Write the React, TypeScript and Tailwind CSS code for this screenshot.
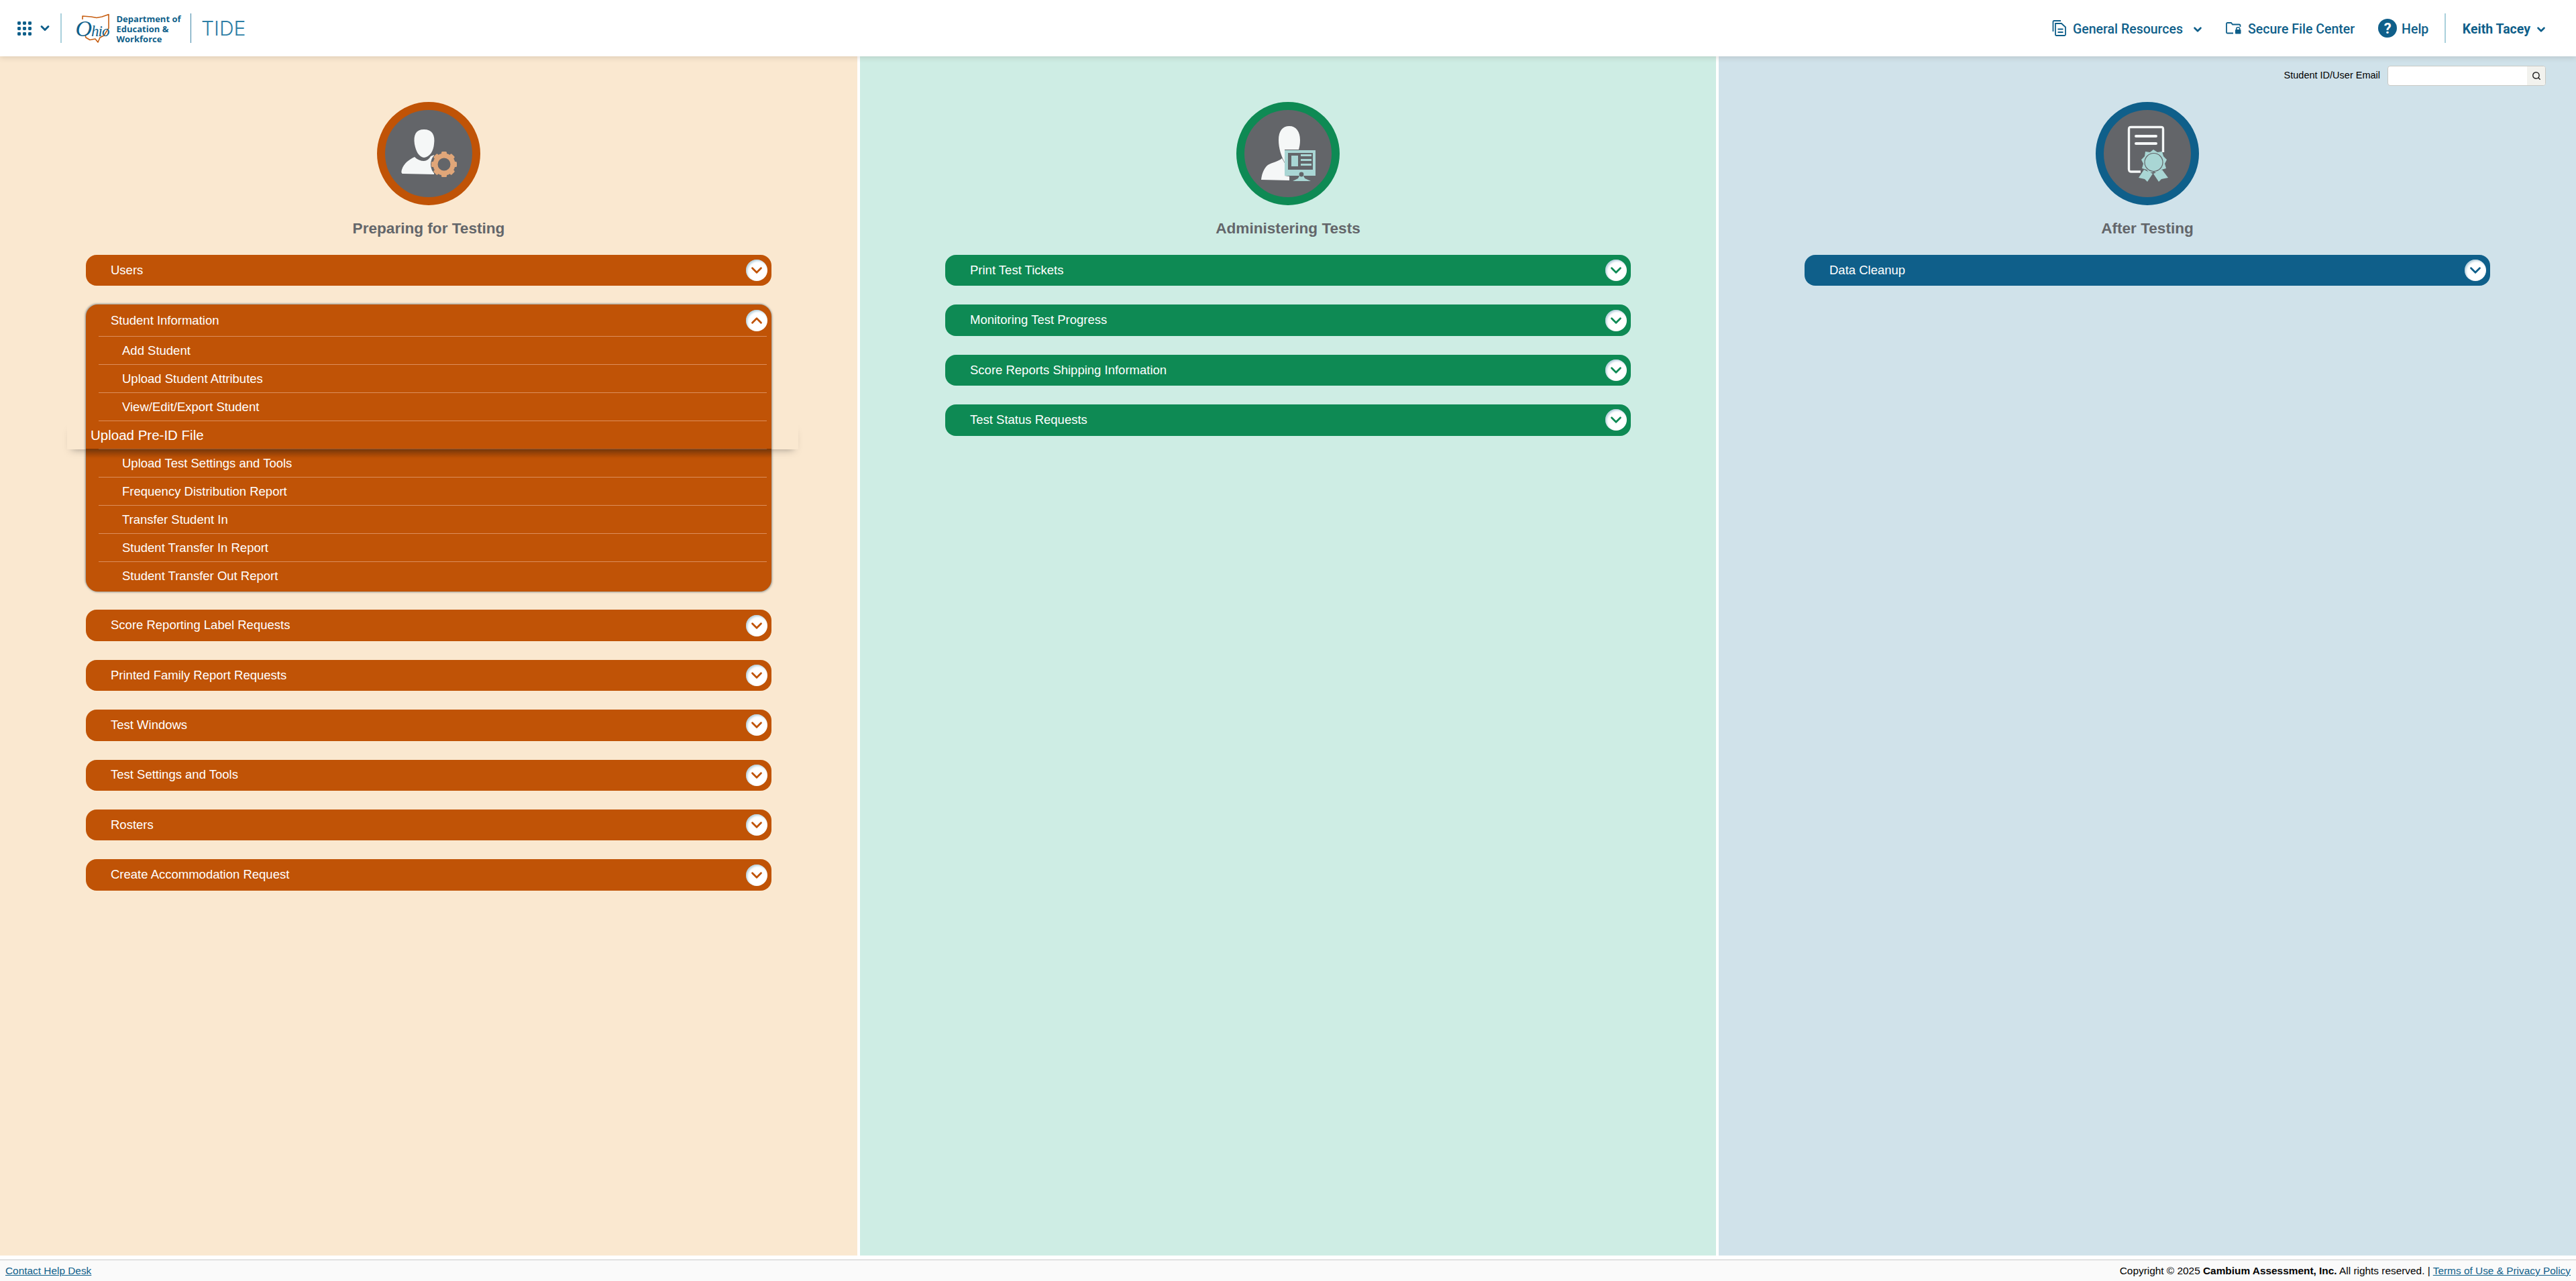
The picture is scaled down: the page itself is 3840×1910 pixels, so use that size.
import type { ReactNode } from 'react'
import { ChevronDown, ChevronUp, Search } from 'lucide-react'

function GridIcon() {
  const cells = [0, 8, 16]
  return (
    <svg width="21" height="21" viewBox="0 0 21 21" fill="#0f5f8a">
      {cells.map((y) => cells.map((x) => <rect key={`${x}-${y}`} x={x} y={y} width="5" height="5" rx="1.4" />))}
    </svg>
  )
}

function OhioLogo() {
  return (
    <div className="relative w-[56px] h-[44px] shrink-0">
      <svg width="56" height="44" viewBox="0 0 56 44" fill="none" className="absolute inset-0">
        <path d="M11 9 L11 4 L24 5 L32 6.5 L40 5 L50 1.5 L50 22 L46 28 L43 33 L37 36 L34 43 L30 38 L22 39.5 L16 36 L15 32" stroke="#c75f13" strokeWidth="1.6" strokeLinejoin="round" />
      </svg>
      <span className="absolute left-[1px] top-[4px] font-['Liberation_Serif',serif] italic leading-[38px] tracking-[-1px] text-[#0f5f8a] whitespace-nowrap">
        <span className="text-[34px]">O</span><span className="text-[23px]">hio</span>
      </span>
    </div>
  )
}

function PreparingIcon() {
  return (
    <svg width="129" height="129" viewBox="0 0 129 129">
      <path d="M43 50 C41 36 45 28 57 28 C69 28 74 36 72 50 C71 60 66 69 57 70 C49 69 45 60 43 50Z" fill="#f5f7f7" />
      <path d="M43 69 C47 73 52 75 57 75 C61 75 65 72 67 68 L72 66 L72 95 L26 94 C23 94 23 91 24 88 C27 78 35 73 43 69Z" fill="#f5f7f7" />
      <circle cx="87" cy="80" r="20" fill="#636569" />
      <circle cx="87" cy="80" r="13" fill="none" stroke="#e0a679" strokeWidth="7" />
      <g fill="#e0a679">
        {[0, 45, 90, 135, 180, 225, 270, 315].map((a) => (
          <rect key={a} x="83" y="61" width="8" height="7" rx="1.5" transform={`rotate(${a} 87 80)`} />
        ))}
      </g>
    </svg>
  )
}

function AdministeringIcon() {
  return (
    <svg width="129" height="129" viewBox="0 0 129 129">
      <path d="M50 44 C50 30 56 23 66 23 C76 23 82 31 82 44 C82 50 81 54 80 58 L59 58 L59 77 C54 68 50 56 50 44Z" fill="#f5f7f7" />
      <path d="M55 71 L59 78 L59 97 L66 98 L66 104 L24 103 C25 94 28 86 34 81 C40 77 50 76 55 71Z" fill="#f5f7f7" />
      <rect x="59" y="59" width="46" height="38" fill="#a9d6d4" />
      <rect x="64" y="63" width="37" height="25" fill="#636569" />
      <rect x="69" y="67" width="10" height="16" fill="#a9d6d4" />
      <rect x="83" y="65" width="16" height="3" fill="#a9d6d4" />
      <rect x="83" y="72" width="16" height="3" fill="#a9d6d4" />
      <rect x="83" y="79" width="16" height="3" fill="#a9d6d4" />
      <path d="M81 97 L87 97 L89 101 L98 105 L71 105 L79 101Z" fill="#a9d6d4" />
      <circle cx="84" cy="95" r="3.4" fill="#636569" />
    </svg>
  )
}

function AfterIcon() {
  return (
    <svg width="129" height="129" viewBox="0 0 129 129">
      <path d="M54 91 L40 91 C37 91 36.5 90 36.5 87 L36.5 28 C36.5 25 37 24.5 40 24.5 L84 24.5 C87 24.5 87.5 25 87.5 28 L87.5 62" fill="none" stroke="#f5f7f7" strokeWidth="3.4" />
      <rect x="45" y="36" width="34" height="4" rx="2" fill="#f5f7f7" />
      <rect x="45" y="47" width="34" height="4" rx="2" fill="#f5f7f7" />
      <path d="M59 88 L51 100 L60 102 L64 106 L72 94Z M86 88 L95 100 L85 102 L81 106 L73 94Z" fill="#a9d6d4" />
      <path d="M73 58 L79 62 L86 61 L88 68 L93 73 L90 79 L92 86 L85 88 L81 94 L74 91 L67 93 L63 88 L56 86 L58 79 L55 73 L60 68 L61 61 L68 62Z" fill="#a9d6d4" />
      <circle cx="73.5" cy="77" r="13.5" fill="#a9d6d4" stroke="#636569" strokeWidth="1.2" />
    </svg>
  )
}

function RoundButton({ open, color }: { open?: boolean; color: string }) {
  const Icon = open ? ChevronUp : ChevronDown
  return (
    <div className="w-[32px] h-[32px] rounded-full bg-white flex items-center justify-center shadow-[inset_2px_2px_3px_rgba(90,150,180,0.45)] shrink-0">
      <Icon size={26} color={color} strokeWidth={2.6} />
    </div>
  )
}

function Bar({ label, bg, color }: { label: string; bg: string; color: string }) {
  return (
    <div className={`${bg} h-[46.4px] mb-[28px] rounded-[16px] flex items-center justify-between pl-[37px] pr-[6px] text-white text-[18.5px]`}>
      <span className="-mt-[1px]">{label}</span>
      <RoundButton color={color} />
    </div>
  )
}

function Row({ label }: { label: string }) {
  return (
    <div className="h-[42px] ml-[19px] border-t-[1.5px] border-[#dc8e5c] flex items-center pl-[35px] text-[18.5px]">
      {label}
    </div>
  )
}

function StudentPanel() {
  return (
    <div className="bg-[#c05306] rounded-[18px] mb-[27px] text-white shadow-[-1px_-1px_3px_rgba(70,90,100,0.55),1px_1px_3px_rgba(70,90,100,0.5)] h-[428px]">
      <div className="h-[47px] flex items-center justify-between pl-[37px] pr-[6px] text-[18.5px]">
        <span>Student Information</span>
        <RoundButton open color="#c05306" />
      </div>
      <div className="mr-[7px]">
        <Row label="Add Student" />
        <Row label="Upload Student Attributes" />
        <Row label="View/Edit/Export Student" />
        <div className="relative h-[42px] ml-[19px] border-t-[1.5px] border-[#dc8e5c] flex items-center text-[20.5px]">
          <span className="-ml-[12px]">Upload Pre-ID File</span>
          {/* hover shadow of the row: faint past the panel edges, darker on the panel */}
          <div className="absolute left-[-47px] right-[-47px] bottom-[-1px] h-[40px] shadow-[0_7px_12px_-7px_rgba(60,60,60,0.5)]" />
          <div className="absolute left-[-19px] right-[-7px] top-[41px] h-[14px] bg-gradient-to-b from-[rgba(60,25,0,0.45)] to-transparent" />
        </div>
        <Row label="Upload Test Settings and Tools" />
        <Row label="Frequency Distribution Report" />
        <Row label="Transfer Student In" />
        <Row label="Student Transfer In Report" />
        <Row label="Student Transfer Out Report" />
      </div>
    </div>
  )
}

function Column({ title, className, ring, icon, children }: { title: string; className: string; ring: string; icon: ReactNode; children: ReactNode }) {
  return (
    <section className={`${className} shrink-0 pt-[68px]`}>
      <div className={`${ring} w-[154px] h-[154px] rounded-full mx-auto border-[12.5px] bg-[#636569] flex items-center justify-center`}>
        {icon}
      </div>
      <h2 className="text-center text-[#63666a] font-bold text-[22.6px] leading-[28px] mt-[21px] mb-[25px]">{title}</h2>
      {children}
    </section>
  )
}

export default function App() {
  const orange = 'bg-[#c05306]'
  const green = 'bg-[#0e8a54]'
  const blue = 'bg-[#0f5f8a]'

  return (
    <div className="font-['Liberation_Sans',Arial,sans-serif] w-[3840px] h-[1910px] flex flex-col bg-white overflow-hidden">
      <header className="relative z-10 h-[84px] shrink-0 bg-white flex items-center justify-between shadow-[0_2px_8px_rgba(90,80,60,0.18)]">
        <div className="flex items-center">
          <div className="pl-[26px] flex items-center gap-[10px] w-[90px]">
            <GridIcon />
            <ChevronDown size={20} color="#0f5f8a" strokeWidth={3.5} />
          </div>
          <div className="w-[1.5px] h-[44px] bg-[#a9d0dc]" />
          <div className="ml-[20px]"><OhioLogo /></div>
          <div className="ml-[6px] pt-[2px] w-[102px] font-['Open_Sans',sans-serif] font-bold text-[13px] leading-[15px] text-[#0f5f8a]">
            Department of<br />Education &amp;<br />Workforce
          </div>
          <div className="ml-[8px] w-[1.5px] h-[44px] bg-[#3f86a8]" />
          <div className="ml-[15px] font-['Inter',sans-serif] font-light text-[30px] text-[#2d7ea5]">TIDE</div>
        </div>
        <div className="flex items-center text-[#0f5f8a] text-[19.5px] font-['Roboto',sans-serif] font-medium pr-[43px]">
          <svg width="21" height="24" viewBox="0 0 21 24" fill="none" stroke="#0f5f8a" strokeWidth="1.8">
            <path d="M1.5 17 V2.5 Q1.5 1 3 1 H13" />
            <path d="M5 5 H14 L20 10.5 V21.5 Q20 23 18.5 23 H6.5 Q5 23 5 21.5Z" />
            <path d="M8.5 13.5 H16.5 M8.5 18 H16.5" />
          </svg>
          <span className="ml-[10px] pt-[3px]">General Resources</span>
          <ChevronDown size={18} strokeWidth={3.5} className="ml-[13px] mt-[3px]" />
          <svg width="23" height="18" viewBox="0 0 23 18" fill="none" stroke="#0f5f8a" strokeWidth="1.8" className="ml-[33px]">
            <path d="M11 16.5 H2.5 Q1 16.5 1 15 V2.5 Q1 1 2.5 1 H8 L10 3.5 H20 Q21.5 3.5 21.5 5 V7" />
            <rect x="14" y="11" width="8.5" height="6.5" rx="1" fill="#0f5f8a" stroke="none" />
            <path d="M15.8 11 V9.5 C15.8 7 20.7 7 20.7 9.5 V11" strokeWidth="1.5" />
          </svg>
          <span className="ml-[10px] pt-[3px]">Secure File Center</span>
          <div className="ml-[35px] w-[28px] h-[28px] rounded-full bg-[#0f5f8a] text-white flex items-center justify-center font-bold text-[22px]">?</div>
          <span className="ml-[7px] pt-[3px]">Help</span>
          <div className="ml-[24px] w-[1.5px] h-[44px] bg-[#a9d0dc]" />
          <span className="ml-[25px] pt-[3px] font-bold">Keith Tacey</span>
          <ChevronDown size={18} strokeWidth={3.5} className="ml-[7px] mt-[3px]" />
        </div>
      </header>

      <main className="relative flex-1 flex gap-[4px]">
        <Column title="Preparing for Testing" className="w-[1278px] px-[128px] bg-[#fae8d0]" ring="border-[#c05306]" icon={<PreparingIcon />}>
          <Bar label="Users" bg={orange} color="#c05306" />
          <StudentPanel />
          {['Score Reporting Label Requests', 'Printed Family Report Requests', 'Test Windows', 'Test Settings and Tools', 'Rosters', 'Create Accommodation Request'].map((l) => (
            <Bar key={l} label={l} bg={orange} color="#c05306" />
          ))}
        </Column>
        <Column title="Administering Tests" className="w-[1276px] px-[127px] bg-[#ceede4]" ring="border-[#0e8a54]" icon={<AdministeringIcon />}>
          {['Print Test Tickets', 'Monitoring Test Progress', 'Score Reports Shipping Information', 'Test Status Requests'].map((l) => (
            <Bar key={l} label={l} bg={green} color="#0e8a54" />
          ))}
        </Column>
        <Column title="After Testing" className="w-[1278px] px-[128px] bg-[#d0e2ea]" ring="border-[#0f5f8a]" icon={<AfterIcon />}>
          <Bar label="Data Cleanup" bg={blue} color="#0f5f8a" />
        </Column>

        <div className="absolute right-[45px] top-[14px] flex items-center gap-[11px] text-[14.5px] text-black">
          <label>Student ID/User Email</label>
          <div className="w-[236px] h-[30px] bg-white rounded-[4px] border border-[#c9c9c4] flex justify-end overflow-hidden">
            <div className="w-[27px] bg-[#f2f2ee] flex items-center justify-center">
              <Search size={14} color="#222" strokeWidth={2.5} />
            </div>
          </div>
        </div>
      </main>

      <footer className="h-[32px] shrink-0 mt-[6px] bg-[#fafafa] border-t-[1.5px] border-[#c8c8c8] flex items-center justify-between px-[8px] text-[15.4px] text-black">
        <a className="text-[#0f5f8a] underline">Contact Help Desk</a>
        <div>
          Copyright © 2025 <b>Cambium Assessment, Inc.</b> All rights reserved. | <a className="text-[#0f5f8a] underline">Terms of Use &amp; Privacy Policy</a>
        </div>
      </footer>
    </div>
  )
}
